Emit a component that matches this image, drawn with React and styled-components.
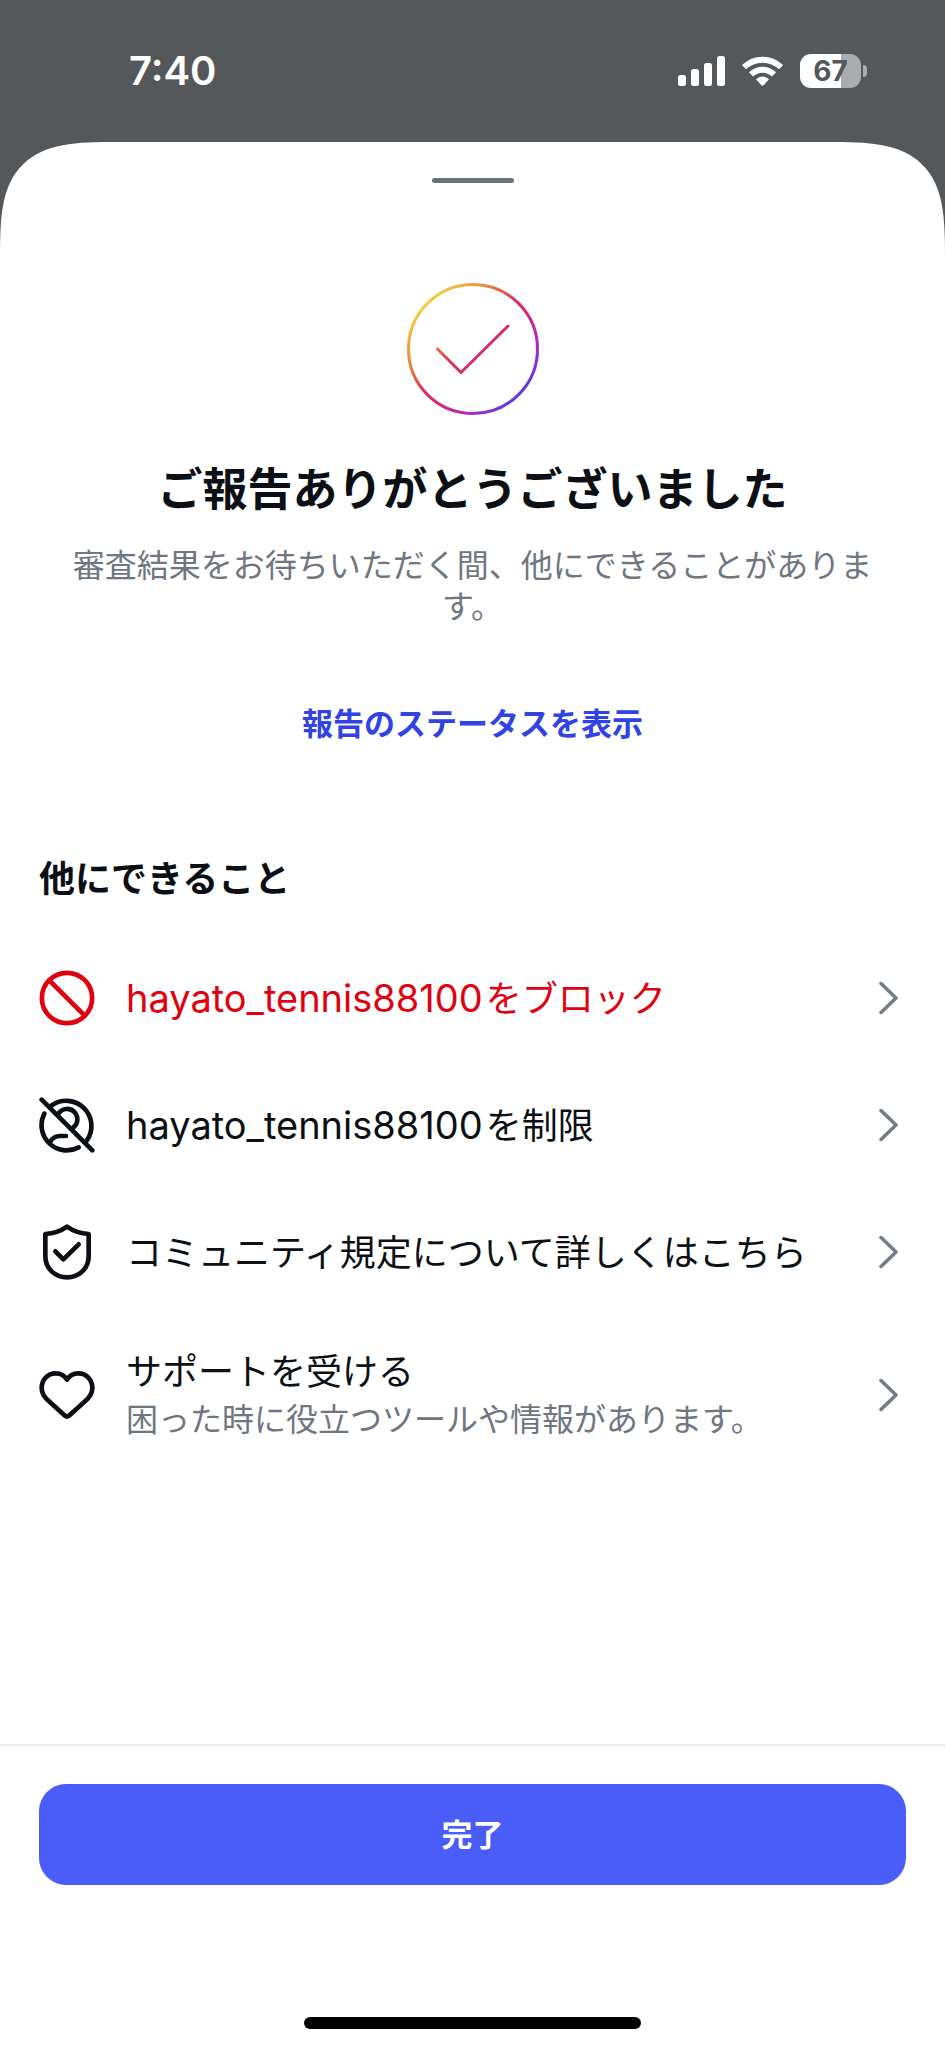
import React from "react";
import styled, { createGlobalStyle } from "styled-components";

const GlobalStyle = createGlobalStyle`
  *, *::before, *::after { box-sizing: border-box; }
  body {
    margin: 0;
    background: #55585b;
    font-family: Inter, "Noto Sans CJK JP", sans-serif;
    color: #0c1014;
  }
  h1, h2, p, ul { margin: 0; padding: 0; }
`;

const Screen = styled.div`
  min-height: 100vh;
  display: flex;
  flex-direction: column;
`;

const StatusBar = styled.header`
  height: 142px;
  padding: 0 78px 0 129px;
  display: flex;
  align-items: center;
  justify-content: space-between;
  color: #fff;
`;

const Clock = styled.time`
  font-size: 40px;
  line-height: 48px;
  font-weight: 600;
`;

const StatusIcons = styled.div`
  display: flex;
  align-items: center;
  gap: 17px;
`;

const Battery = styled.div`
  display: flex;
  align-items: center;
  gap: 2px;
`;

const BatteryBody = styled.div`
  width: 61px;
  height: 34px;
  border-radius: 11px;
  background: linear-gradient(to right, #fff 67%, #aaacad 67%);
  color: #55585b;
  font-size: 28px;
  line-height: 34px;
  font-weight: 700;
  text-align: center;
`;

const BatteryTip = styled.div`
  width: 4px;
  height: 12px;
  border-radius: 0 4px 4px 0;
  background: #aaacad;
`;

const Sheet = styled.main`
  flex: 1;
  display: flex;
  flex-direction: column;
  background: #fff;
  border-radius: 78px 78px 0 0;
  @supports (corner-shape: squircle) {
    border-radius: 118px 118px 0 0;
    corner-shape: superellipse(1.7);
  }
`;

const Handle = styled.div`
  width: 82px;
  height: 5px;
  margin: 36px auto 0;
  border-radius: 3px;
  background: #6a727f;
`;

const Intro = styled.section`
  display: flex;
  flex-direction: column;
  align-items: center;
  padding: 100px 70px 0;
  text-align: center;
`;

const Title = styled.h1`
  margin-top: 45px;
  font-size: 45px;
  line-height: 60px;
  font-weight: 700;
`;

const Lead = styled.p`
  margin-top: 25px;
  font-size: 32px;
  line-height: 41px;
  color: #6f7680;
`;

const StatusLink = styled.a`
  margin-top: 75px;
  font-size: 31px;
  line-height: 44px;
  font-weight: 700;
  color: #3143e3;
  text-decoration: none;
`;

const Options = styled.section`
  padding-top: 111px;
`;

const SectionTitle = styled.h2`
  padding: 0 39px;
  font-size: 36px;
  line-height: 44px;
  font-weight: 700;
`;

const OptionList = styled.ul`
  margin-top: 33px;
  list-style: none;
`;

const OptionButton = styled.button`
  width: 100%;
  min-height: 127px;
  padding: 33px 46px 33px 39px;
  display: flex;
  align-items: center;
  gap: 31px;
  border: 0;
  background: none;
  font-family: inherit;
  text-align: left;
  color: ${(p) => (p.$danger ? "#e0000f" : "#0c1014")};
  cursor: pointer;
`;

const OptionText = styled.span`
  flex: 1;
  padding-top: 2px;
  display: flex;
  flex-direction: column;
  gap: 4px;
`;

const OptionLabel = styled.span`
  font-size: 36px;
  line-height: 44px;
`;

const Username = styled.span`
  margin-right: 3px;
  font-size: 38px;
`;

const OptionHint = styled.span`
  font-size: 32px;
  line-height: 44px;
  color: #6f7680;
`;

const Icon = styled.svg`
  flex: none;
  display: block;
  fill: none;
  stroke: currentColor;
  stroke-width: 14;
  stroke-linecap: round;
  stroke-linejoin: round;
`;

const Chevron = styled.svg`
  flex: none;
  display: block;
  fill: none;
  stroke: #737b86;
  stroke-width: 3.5;
  stroke-linecap: round;
  stroke-linejoin: round;
`;

const Footer = styled.footer`
  margin-top: auto;
  padding: 38px 39px 19px;
  border-top: 2px solid #e9eaeb;
`;

const DoneButton = styled.button`
  display: block;
  width: 100%;
  height: 101px;
  border: 0;
  border-radius: 27px;
  background: #4a5df9;
  color: #fff;
  font-family: inherit;
  font-size: 31px;
  line-height: 44px;
  font-weight: 700;
  cursor: pointer;
`;

const HomeIndicator = styled.div`
  width: 337px;
  height: 12px;
  margin: 132px auto 0;
  border-radius: 6px;
  background: #000;
`;

function SignalIcon() {
  return (
    <svg width="47" height="30" viewBox="0 0 47 30" fill="#fff" aria-hidden="true">
      <rect x="0" y="19" width="8" height="11" rx="2.5" />
      <rect x="13" y="13" width="8" height="17" rx="2.5" />
      <rect x="26" y="7" width="8" height="23" rx="2.5" />
      <rect x="39" y="0" width="8" height="30" rx="2.5" />
    </svg>
  );
}

function WifiIcon() {
  return (
    <svg width="41" height="30" viewBox="0 0 41 30" aria-hidden="true">
      <g fill="none" stroke="#fff" strokeWidth="6">
        <path d="M2 11.2a26.4 26.4 0 0 1 37 0" />
        <path d="M9 18.4a16.4 16.4 0 0 1 23 0" />
      </g>
      <path d="M14 23.2a9.4 9.4 0 0 1 13 0l-5.4 6a1.5 1.5 0 0 1-2.2 0z" fill="#fff" />
    </svg>
  );
}

function SuccessIcon() {
  return (
    <svg width="132" height="132" viewBox="0 0 132 132" aria-hidden="true">
      <defs>
        <linearGradient id="rainbow" gradientUnits="userSpaceOnUse" x1="19" y1="19" x2="113" y2="113">
          <stop offset="0" stopColor="#f6d043" />
          <stop offset="0.15" stopColor="#ee9f3b" />
          <stop offset="0.3" stopColor="#e5703e" />
          <stop offset="0.46" stopColor="#d93058" />
          <stop offset="0.6" stopColor="#d22a80" />
          <stop offset="0.83" stopColor="#ac2bc4" />
          <stop offset="1" stopColor="#5a38e2" />
        </linearGradient>
      </defs>
      <g fill="none" stroke="url(#rainbow)" strokeWidth="3" strokeLinecap="round" strokeLinejoin="round">
        <circle cx="66" cy="66" r="64.5" />
        <path d="M30.5 66L54 89.5L101 43" />
      </g>
    </svg>
  );
}

const icons = {
  block: (
    <>
      <circle cx="84" cy="84" r="75.5" />
      <path d="M31 31L137 137" />
    </>
  ),
  restrict: (
    <>
      <path d="M8 8L160 160" />
      <path d="M37 26A75.5 75.5 0 0 1 143 131" />
      <path d="M16 50A75.5 75.5 0 0 0 119 151" />
      <path d="M58 50A31 31 0 1 1 97 95" />
      <path d="M34 134Q44 117 62 117H81" />
    </>
  ),
  shield: (
    <>
      <path d="M84 8Q56 28 19 30V96C19 134 48 160 84 160S149 134 149 96V30Q112 28 84 8Z" />
      <path d="M49 82L73 106L119 61" />
    </>
  ),
  heart: (
    <path d="M84 38C76 24 64 19 50 19C26 19 8 38 8 63C8 82 17 92 30 103L78 146Q84 151 90 146L138 103C151 92 160 82 160 63C160 38 142 19 118 19C104 19 92 24 84 38Z" />
  ),
};

const options = [
  { icon: "block", user: "hayato_tennis88100", label: "をブロック", danger: true },
  { icon: "restrict", user: "hayato_tennis88100", label: "を制限" },
  { icon: "shield", label: "コミュニティ規定について詳しくはこちら" },
  { icon: "heart", label: "サポートを受ける", hint: "困った時に役立つツールや情報があります。" },
];

function Option({ icon, user, label, hint, danger }) {
  return (
    <li>
      <OptionButton type="button" $danger={danger}>
        <Icon width="56" height="56" viewBox="0 0 168 168" aria-hidden="true">
          {icons[icon]}
        </Icon>
        <OptionText>
          <OptionLabel>
            {user && <Username>{user}</Username>}
            {label}
          </OptionLabel>
          {hint && <OptionHint>{hint}</OptionHint>}
        </OptionText>
        <Chevron width="20" height="34" viewBox="0 0 20 34" aria-hidden="true">
          <path d="M2 2.5L17 17L2 31.5" />
        </Chevron>
      </OptionButton>
    </li>
  );
}

export default function App() {
  return (
    <Screen lang="ja">
      <GlobalStyle />
      <StatusBar>
        <Clock>7:40</Clock>
        <StatusIcons>
          <SignalIcon />
          <WifiIcon />
          <Battery>
            <BatteryBody>67</BatteryBody>
            <BatteryTip />
          </Battery>
        </StatusIcons>
      </StatusBar>
      <Sheet>
        <Handle />
        <Intro>
          <SuccessIcon />
          <Title>ご報告ありがとうございました</Title>
          <Lead>審査結果をお待ちいただく間、他にできることがあります。</Lead>
          <StatusLink href="#status">報告のステータスを表示</StatusLink>
        </Intro>
        <Options>
          <SectionTitle>他にできること</SectionTitle>
          <OptionList>
            {options.map((o) => (
              <Option key={o.icon} {...o} />
            ))}
          </OptionList>
        </Options>
        <Footer>
          <DoneButton type="button">完了</DoneButton>
          <HomeIndicator />
        </Footer>
      </Sheet>
    </Screen>
  );
}
